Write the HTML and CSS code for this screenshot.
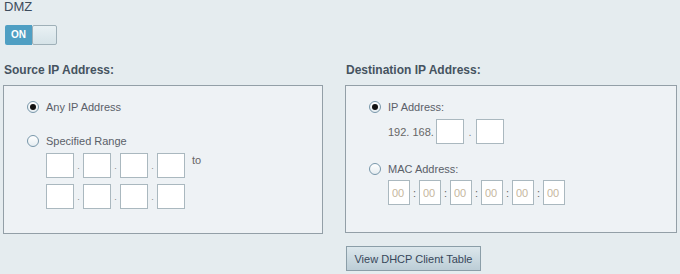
FILE: index.html
```html
<!DOCTYPE html>
<html lang="en">
<head>
    <meta charset="UTF-8">
    <title>DMZ</title>
    <link rel="stylesheet" href="styles.css">
</head>
<body>
    <div class="page">
        <div class="title">DMZ</div>
        <div class="toggle">
            <span class="toggle-on">ON</span>
            <span class="toggle-knob"></span>
        </div>

        <div class="columns">
            <div class="col col-left">
                <div class="heading">Source IP Address:</div>
                <div class="panel">
                    <div class="radio-row">
                        <span class="radio checked"></span>
                        <span>Any IP Address</span>
                    </div>
                    <div class="radio-row second">
                        <span class="radio"></span>
                        <span>Specified Range</span>
                    </div>
                    <div class="ip-row first">
                        <input class="box" type="text"><span class="dot">.</span>
                        <input class="box" type="text"><span class="dot">.</span>
                        <input class="box" type="text"><span class="dot">.</span>
                        <input class="box" type="text">
                        <span class="to">to</span>
                    </div>
                    <div class="ip-row">
                        <input class="box" type="text"><span class="dot">.</span>
                        <input class="box" type="text"><span class="dot">.</span>
                        <input class="box" type="text"><span class="dot">.</span>
                        <input class="box" type="text">
                    </div>
                </div>
            </div>

            <div class="col col-right">
                <div class="heading">Destination IP Address:</div>
                <div class="panel">
                    <div class="radio-row">
                        <span class="radio checked"></span>
                        <span>IP Address:</span>
                    </div>
                    <div class="ip-row dest">
                        <span class="prefix">192. 168.</span>
                        <input class="box" type="text"><span class="dot wide">.</span>
                        <input class="box" type="text">
                    </div>
                    <div class="radio-row mac-label">
                        <span class="radio"></span>
                        <span>MAC Address:</span>
                    </div>
                    <div class="ip-row mac">
                        <input class="box small" type="text" placeholder="00"><span class="colon">:</span>
                        <input class="box small" type="text" placeholder="00"><span class="colon">:</span>
                        <input class="box small" type="text" placeholder="00"><span class="colon">:</span>
                        <input class="box small" type="text" placeholder="00"><span class="colon">:</span>
                        <input class="box small" type="text" placeholder="00"><span class="colon">:</span>
                        <input class="box small" type="text" placeholder="00">
                    </div>
                </div>
                <button class="btn" type="button">View DHCP Client Table</button>
            </div>
        </div>
    </div>
</body>
</html>
```

FILE: styles.css
```css
body {
    margin: 0;
    padding: 0;
    background-color: #e5ecef;
    font-family: "Liberation Sans", Arial, sans-serif;
    color: #5a6069;
    font-size: 11px;
}
.page {
    width: 680px;
    height: 274px;
    padding: 0 0 0 3px;
    box-sizing: border-box;
    overflow: hidden;
}
.title {
    font-size: 13px;
    color: #3d4b5c;
    line-height: 14px;
    padding-left: 1px;
}
.toggle {
    display: flex;
    width: 52px;
    height: 20px;
    margin: 11px 0 0 2px;
}
.toggle-on {
    width: 27px;
    background-color: #4f9fc3;
    color: #fff;
    font-size: 10px;
    font-weight: bold;
    line-height: 20px;
    text-align: center;
    border-radius: 2px 0 0 2px;
}
.toggle-knob {
    flex: 1;
    background: linear-gradient(#e9f1f4, #d6e3e8);
    border: 1px solid #9fb0b8;
    border-radius: 2px;
    box-sizing: border-box;
}
.columns {
    display: flex;
    gap: 22px;
    margin-top: 18px;
}
.col-left {
    width: 320px;
}
.col-right {
    width: 332px;
}
.heading {
    font-size: 12px;
    font-weight: bold;
    color: #45535f;
    line-height: 14px;
    padding-left: 1px;
    margin-bottom: 8px;
}
.panel {
    height: 149px;
    box-sizing: border-box;
    border: 1px solid #939fa7;
    background-color: #eef2f5;
    padding: 14px 0 0 42px;
}
.col-right .panel {
    height: 148px;
}
.radio-row {
    display: flex;
    align-items: center;
    height: 14px;
    margin-left: -19px;
    gap: 7px;
}
.radio-row.second {
    margin-top: 20px;
}
.radio {
    width: 12px;
    height: 12px;
    box-sizing: border-box;
    border: 1px solid #7897aa;
    border-radius: 50%;
    background: linear-gradient(#ffffff, #e6edf1);
    display: flex;
    align-items: center;
    justify-content: center;
}
.radio.checked::after {
    content: "";
    width: 6px;
    height: 6px;
    border-radius: 50%;
    background-color: #111;
}
.ip-row {
    display: flex;
    align-items: center;
    height: 25px;
    margin-top: 6px;
}
.ip-row.first {
    margin-top: 5px;
}
.box {
    width: 28px;
    height: 25px;
    box-sizing: border-box;
    border: 1px solid #aab8bf;
    background: #fff;
    margin: 0;
    padding: 0 0 0 4px;
    font-family: "Liberation Sans", Arial, sans-serif;
    font-size: 11px;
    outline: none;
}
.box.small {
    width: 22px;
    padding-left: 3px;
}
.box::placeholder {
    color: #c6b7a0;
}
.dot {
    width: 9px;
    text-align: center;
    font-size: 9px;
    color: #888;
}
.dot.wide {
    width: 12px;
    font-size: 11px;
}
.colon {
    width: 9px;
    text-align: center;
    color: #666;
}
.to {
    align-self: flex-start;
    margin: 1px 0 0 7px;
    color: #666;
}
.ip-row.dest {
    margin-top: 5px;
}
.prefix {
    width: 48px;
    color: #666;
}
.mac-label {
    margin-top: 18px;
}
.ip-row.mac {
    margin-top: 4px;
}
.btn {
    display: block;
    margin: 13px 0 0 1px;
    width: 135px;
    height: 25px;
    border: 1px solid #8b9ea8;
    background: linear-gradient(#dce7ec, #bccdd6);
    color: #37475a;
    font-family: "Liberation Sans", Arial, sans-serif;
    font-size: 11px;
    padding: 0;
    cursor: pointer;
}
```
